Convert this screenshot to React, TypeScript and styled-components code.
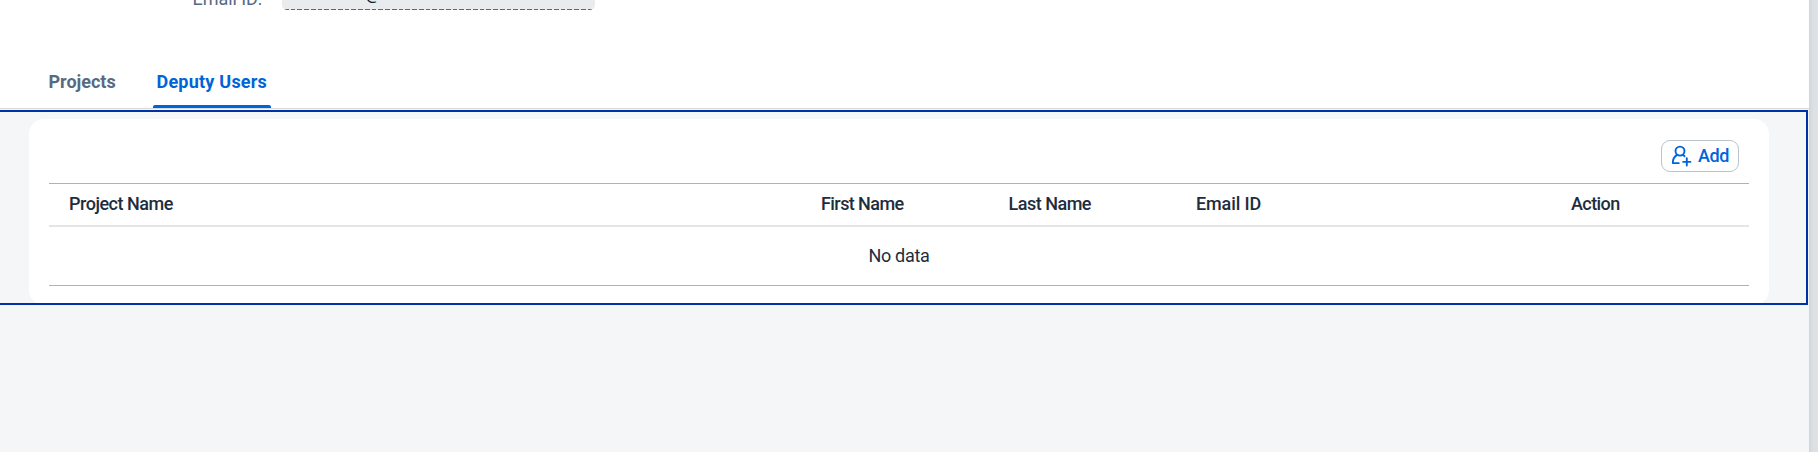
import React from "react";
import styled, { createGlobalStyle } from "styled-components";

const Global = createGlobalStyle`
  * { box-sizing: border-box; }
  html, body { margin: 0; height: 100%; overflow: hidden; }
  body { font-family: Roboto, "Liberation Sans", sans-serif; background: #dee2e5; }
`;
const Shell = styled.div`
  display: flex;
  height: 452px;
`;
const Page = styled.main`
  width: 1809px;
  height: 452px;
  background: #f5f6f7;
  overflow: hidden;
`;
const Gutter = styled.div`
  flex: 1;
  background: linear-gradient(90deg, #d0d5da, #dce0e3 4px, #dfe2e5);
`;
const Header = styled.header`
  height: 109px;
  background: #fff;
  border-bottom: 1px solid #d9d9d9;
  display: flex;
  flex-direction: column;
  justify-content: space-between;
`;
const FieldRow = styled.div`
  display: flex;
  height: 10px;
  padding-left: 192.5px;
  align-items: flex-end;
`;
const Label = styled.span`
  width: 89.5px;
  font-size: 18px;
  line-height: 22px;
  letter-spacing: -0.05px;
  color: #556b82;
`;
const Field = styled.div`
  width: 313px;
  height: 10px;
  padding-left: 83px;
  display: flex;
  align-items: flex-end;
  overflow: hidden;
  font-size: 18px;
  line-height: 34px;
  color: #131e29;
  border-radius: 0 0 5px 5px;
  background:
    repeating-linear-gradient(90deg, #556b82 0 4.7px, #e9ebed 4.7px 6.75px) 2px 100% / 310px 1px no-repeat,
    linear-gradient(#eaebed, #eaebed) 0 0 / 100% 9px no-repeat;
`;
const Tabs = styled.nav`
  display: flex;
  gap: 33px;
  padding-left: 45px;
`;
const Tab = styled.div<{ $active?: boolean; $width: number; $track: number }>`
  width: ${(p) => p.$width}px;
  height: 42px;
  padding: 4px 0 0 3.5px;
  white-space: nowrap;
  font-size: 18px;
  line-height: 24px;
  font-weight: 700;
  letter-spacing: ${(p) => p.$track}px;
  color: ${(p) => (p.$active ? "#0064d9" : "#556b82")};
  display: flex;
  flex-direction: column;
  justify-content: space-between;
  &::after {
    content: "";
    height: 3px;
    margin-left: -3.5px;
    border-radius: 2px 2px 0 0;
    background: ${(p) => (p.$active ? "#0064d9" : "transparent")};
  }
`;
const Section = styled.section`
  width: 1808px;
  height: 195px;
  margin-top: 1px;
  padding: 7px 37px 0 29px;
  border: solid #0032a5;
  border-width: 2px 2px 2px 0;
  overflow: hidden;
`;
const Card = styled.div`
  height: 186px;
  border-radius: 15px;
  background: #fff;
  padding: 0 20px;
`;
const Toolbar = styled.div`
  height: 64px;
  display: flex;
  justify-content: flex-end;
  padding: 21px 10px 0 0;
`;
const AddButton = styled.button`
  width: 78px;
  height: 32px;
  padding: 0 0 0 9px;
  display: flex;
  align-items: center;
  gap: 6px;
  border: 1px solid #bcc3ca;
  border-radius: 9px;
  background: #fff;
  color: #0064d9;
  font: 500 18px/30px Roboto, "Liberation Sans", sans-serif;
  letter-spacing: -0.4px;
`;
const HeadRow = styled.div`
  display: flex;
  height: 44px;
  padding-left: 20px;
  border-top: 1px solid #a8b3bd;
  border-bottom: 2px solid #e5e5e5;
`;
const HeadCell = styled.div<{ $width: number; $track: number }>`
  width: ${(p) => p.$width}px;
  font-size: 18px;
  font-weight: 500;
  line-height: 40px;
  letter-spacing: ${(p) => p.$track}px;
  color: #1d2d3e;
  white-space: nowrap;
`;
const EmptyRow = styled.div`
  height: 59px;
  border-bottom: 1px solid #a8b3bd;
  text-align: center;
  font-size: 18px;
  line-height: 58px;
  letter-spacing: -0.3px;
  color: #1d2d3e;
`;

const columns = [
  { label: "Project Name", width: 752, track: -0.48 },
  { label: "First Name", width: 187.5, track: -0.58 },
  { label: "Last Name", width: 187.5, track: -0.5 },
  { label: "Email ID", width: 375, track: -0.12 },
  { label: "Action", width: 170, track: -0.6 },
];

const AddUserIcon = () => (
  <svg width="21" height="22" viewBox="0 0 21 22" fill="none" stroke="#0064d9" strokeWidth="1.9" strokeLinecap="round" strokeLinejoin="round">
    <circle cx="9" cy="6.1" r="4.5" />
    <path d="M5.9 9.9C3.2 11.7 1.8 14.2 1.8 18.1H7.8M12.1 9.9L13.6 11.2" />
    <path d="M15.8 13.3V20.5M12.2 16.9H19.4" />
  </svg>
);

export default function App() {
  return (
    <>
      <Global />
      <Shell>
        <Page>
          <Header>
            <FieldRow>
              <Label>Email ID:</Label>
              <Field>@</Field>
            </FieldRow>
            <Tabs>
              <Tab $width={75} $track={0}>Projects</Tab>
              <Tab $width={118} $track={0.22} $active>Deputy Users</Tab>
            </Tabs>
          </Header>
          <Section>
            <Card>
              <Toolbar>
                <AddButton>
                  <AddUserIcon />
                  Add
                </AddButton>
              </Toolbar>
              <HeadRow>
                {columns.map((c) => (
                  <HeadCell key={c.label} $width={c.width} $track={c.track}>{c.label}</HeadCell>
                ))}
              </HeadRow>
              <EmptyRow>No data</EmptyRow>
            </Card>
          </Section>
        </Page>
        <Gutter />
      </Shell>
    </>
  );
}
